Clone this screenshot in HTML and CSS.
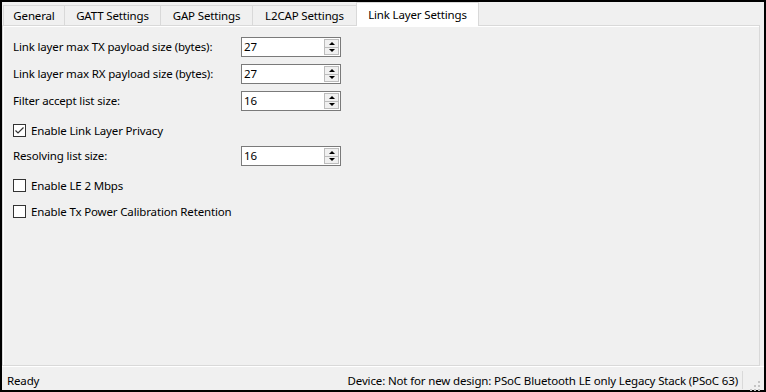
FILE: index.html
```html
<!DOCTYPE html>
<html lang="en">
<head>
    <meta charset="UTF-8">
    <title>Bluetooth Configurator - Link Layer Settings</title>
    <link rel="stylesheet" href="styles.css">
</head>
<body>
    <div class="window">
        <div class="tabs">
            <div class="tab tab-general">General</div>
            <div class="tab tab-gatt">GATT Settings</div>
            <div class="tab tab-gap">GAP Settings</div>
            <div class="tab tab-l2cap">L2CAP Settings</div>
            <div class="tab tab-link active">Link Layer Settings</div>
        </div>
        <div class="panel">
            <div class="field first">
                <div class="field-label">Link layer max TX payload size (bytes):</div>
                <div class="spin">
                    <div class="spin-value">27</div>
                    <div class="spin-buttons">
                        <div class="spin-up"></div>
                        <div class="spin-down"></div>
                    </div>
                </div>
            </div>
            <div class="field">
                <div class="field-label">Link layer max RX payload size (bytes):</div>
                <div class="spin">
                    <div class="spin-value">27</div>
                    <div class="spin-buttons">
                        <div class="spin-up"></div>
                        <div class="spin-down"></div>
                    </div>
                </div>
            </div>
            <div class="field">
                <div class="field-label">Filter accept list size:</div>
                <div class="spin">
                    <div class="spin-value">16</div>
                    <div class="spin-buttons">
                        <div class="spin-up"></div>
                        <div class="spin-down"></div>
                    </div>
                </div>
            </div>
            <div class="check">
                <div class="check-box">
                    <svg width="11" height="11" viewBox="0 0 11 11"><polyline points="1.5,5.5 4,8 9.5,2.5" fill="none" stroke="#333" stroke-width="1.2"/></svg>
                </div>
                <div class="check-label">Enable Link Layer Privacy</div>
            </div>
            <div class="field after-check">
                <div class="field-label">Resolving list size:</div>
                <div class="spin">
                    <div class="spin-value">16</div>
                    <div class="spin-buttons">
                        <div class="spin-up"></div>
                        <div class="spin-down"></div>
                    </div>
                </div>
            </div>
            <div class="check">
                <div class="check-box"></div>
                <div class="check-label">Enable LE 2 Mbps</div>
            </div>
            <div class="check">
                <div class="check-box"></div>
                <div class="check-label">Enable Tx Power Calibration Retention</div>
            </div>
        </div>
        <div class="status">
            <div class="status-left">Ready</div>
            <div class="status-right">Device: Not for new design: PSoC Bluetooth LE only Legacy Stack (PSoC 63)</div>
            <div class="status-sep"></div>
            <div class="grip">
                <svg width="10" height="10" viewBox="0 0 10 10">
                    <rect x="8" y="0" width="2" height="2" fill="#c4c4c4"/>
                    <rect x="4" y="4" width="2" height="2" fill="#c4c4c4"/>
                    <rect x="8" y="4" width="2" height="2" fill="#c4c4c4"/>
                    <rect x="0" y="8" width="2" height="2" fill="#c4c4c4"/>
                    <rect x="4" y="8" width="2" height="2" fill="#c4c4c4"/>
                    <rect x="8" y="8" width="2" height="2" fill="#c4c4c4"/>
                </svg>
            </div>
        </div>
    </div>
</body>
</html>
```

FILE: styles.css
```css
body {
    margin: 0;
    background-color: #000;
    font-family: "Noto Sans", "Open Sans", sans-serif;
    font-size: 11.5px;
    letter-spacing: -0.15px;
    color: #000;
}
.window {
    width: 766px;
    height: 392px;
    box-sizing: border-box;
    border: 2px solid #000;
    background-color: #f0f0f0;
    display: flex;
    flex-direction: column;
}
.tabs {
    display: flex;
    align-items: flex-end;
    height: 24px;
    padding-left: 1px;
    position: relative;
    z-index: 1;
}
.tab {
    height: 20px;
    box-sizing: border-box;
    border: 1px solid #d9d9d9;
    border-bottom: none;
    margin-left: -1px;
    display: flex;
    align-items: center;
    justify-content: center;
    background-color: #f0f0f0;
    margin-bottom: 1px;
}
.tab-general {
    margin-left: 0;
    width: 62px;
}
.tab-gatt {
    width: 97px;
}
.tab-gap {
    width: 93px;
}
.tab-l2cap {
    width: 105px;
}
.tab-link {
    width: 123px;
}
.tab.active {
    height: 24px;
    margin-bottom: 0;
    background-color: #fff;
}
.panel {
    flex: 1;
    margin-top: -1px;
    margin-right: 4px;
    border: 1px solid #d9d9d9;
    box-shadow: inset 1px 1px 0 #fff;
    padding: 11px 0 0 10px;
}
.field {
    display: flex;
    align-items: center;
    height: 20px;
    margin-top: 7px;
}
.field.first {
    margin-top: 0;
}
.field.after-check {
    margin-top: 9px;
}
.field-label {
    width: 228px;
    padding-bottom: 2px;
}
.spin {
    width: 100px;
    height: 20px;
    box-sizing: border-box;
    border: 1px solid #7a7a7a;
    background-color: #fff;
    display: flex;
}
.spin-value {
    flex: 1;
    padding-left: 2px;
    line-height: 18px;
}
.spin-buttons {
    width: 15px;
    display: flex;
    flex-direction: column;
    padding: 1px 1px 1px 0;
}
.spin-up,
.spin-down {
    flex: 1;
    border: 1px solid #bcbcbc;
    background-color: #f0f0f0;
    display: flex;
    align-items: center;
    justify-content: center;
}
.spin-up {
    border-bottom: none;
}
.spin-up::after {
    content: "";
    border-left: 3px solid transparent;
    border-right: 3px solid transparent;
    border-bottom: 3px solid #000;
}
.spin-down::after {
    content: "";
    border-left: 3px solid transparent;
    border-right: 3px solid transparent;
    border-top: 3px solid #000;
}
.check {
    display: flex;
    align-items: center;
    height: 14px;
    margin-top: 12px;
}
.check-box {
    width: 13px;
    height: 13px;
    box-sizing: border-box;
    border: 1px solid #333;
    background-color: #fff;
    margin-right: 5px;
    display: flex;
    align-items: center;
    justify-content: center;
}
.status {
    height: 24px;
    display: flex;
    align-items: center;
    padding: 3px 4px 0 5px;
    box-sizing: border-box;
    border-top: 1px solid #fff;
}
.status-left {
    flex: 1;
}
.status-sep {
    width: 1px;
    height: 18px;
    background-color: #d9d9d9;
    margin-left: 4px;
    margin-right: 7px;
}
.grip {
    align-self: flex-end;
    margin-bottom: 1px;
    height: 10px;
}
```
